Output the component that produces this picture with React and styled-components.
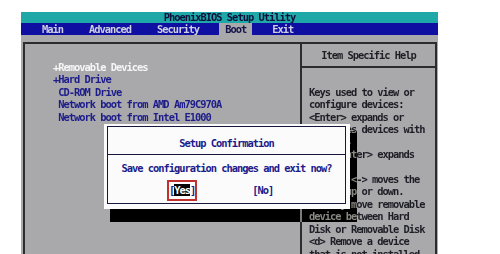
import React from "react";
import styled, { createGlobalStyle } from "styled-components";

const GRAY = "#a9a8aa";
const NAVY = "#1c1c8a";

const Global = createGlobalStyle`
  html, body { margin: 0; padding: 0; background: #ffffff; overflow: hidden; }
`;

const Page = styled.div`
  width: 500px;
  height: 254px;
  box-sizing: border-box;
  padding: 12px 0 0 21px;
  overflow: hidden;
`;

const Screen = styled.div`
  position: relative;
  width: 417px;
  font-family: "DejaVu Sans Mono", "Liberation Mono", monospace;
  font-size: 10.4px;
  font-weight: bold;
  letter-spacing: -1.0px;
`;

const TitleBar = styled.div`
  height: 11px;
  line-height: 11px;
  background: #1ea8a8;
  color: #0e0e3c;
  text-align: center;
`;

const MenuBar = styled.div`
  display: flex;
  height: 12px;
  padding-left: 15px;
  gap: 14px;
  background: #0f0fa2;
`;

const MenuItem = styled.div`
  padding: 0 6px;
  line-height: 12px;
  color: ${(p) => (p.$active ? "#14144a" : "#cfd0e2")};
  background: ${(p) => (p.$active ? GRAY : "transparent")};
`;

const Body = styled.div`
  background: ${GRAY};
  padding: 7px 1px 0 2px;
  height: 230px;
  box-sizing: border-box;
`;

const Frame = styled.div`
  display: grid;
  grid-template-columns: 275px 1fr;
  border: 2px solid #2c2c30;
  border-bottom: none;
  height: 240px;
`;

const LeftPanel = styled.div`
  padding: 16.8px 0 0 28px;
  line-height: 12.45px;
`;

const Item = styled.div`
  white-space: pre;
  color: ${(p) => (p.$selected ? "#f6f6f6" : NAVY)};
`;

const RightPanel = styled.div`
  border-left: 2px solid #2c2c30;
`;

const HelpHeader = styled.div`
  height: 22px;
  line-height: 22px;
  text-align: center;
  color: #1e1e24;
  border-bottom: 2px solid #2c2c30;
`;

const HelpBody = styled.div`
  padding: 17.8px 0 0 7px;
  line-height: 12.45px;
  color: #1e1e26;
`;

const HelpLine = styled.div`
  white-space: pre;
`;

const Shadow = styled.div`
  position: absolute;
  left: 89px;
  top: 119px;
  width: 247px;
  height: 91px;
  background: ${GRAY};
  mix-blend-mode: difference;
`;

const Dialog = styled.div`
  position: absolute;
  left: 83px;
  top: 112px;
  width: 246px;
  height: 85px;
  box-sizing: border-box;
  padding: 2px 4px 5px 3px;
  background: #fbfbfb;
`;

const DialogInner = styled.div`
  height: 100%;
  box-sizing: border-box;
  border: 1px solid #17173e;
  display: flex;
  flex-direction: column;
`;

const DialogTitle = styled.div`
  padding-top: 5px;
  height: 22px;
  line-height: 22px;
  text-align: center;
  color: ${NAVY};
  border-bottom: 1px solid #17173e;
`;

const Message = styled.div`
  padding-top: 6.5px;
  line-height: 12.45px;
  text-align: center;
  color: ${NAVY};
`;

const ButtonRow = styled.div`
  display: flex;
  align-items: center;
  gap: 55px;
  padding-left: 59px;
  margin-top: 6.5px;
`;

const Focus = styled.div`
  display: flex;
  align-items: center;
  height: 21px;
  box-sizing: border-box;
  border: 2px solid #c0302e;
`;

const Btn = styled.span`
  color: ${NAVY};
  line-height: 13px;
  white-space: pre;
`;

const Hi = styled.span`
  background: #050505;
  color: #ffffff;
`;

const menu = ["Main", "Advanced", "Security", "Boot", "Exit"];
const items = [
  { t: "+Removable Devices", sel: true },
  { t: "+Hard Drive" },
  { t: " CD-ROM Drive" },
  { t: " Network boot from AMD Am79C970A" },
  { t: " Network boot from Intel E1000" },
];
const help = [
  "Keys used to view or",
  "configure devices:",
  "<Enter> expands or",
  "collapses devices with",
  "a + or -",
  "<Ctrl+Enter> expands",
  "all",
  "<+> and <-> moves the",
  "device up or down.",
  "<n> May move removable",
  "device between Hard",
  "Disk or Removable Disk",
  "<d> Remove a device",
  "that is not installed.",
];

export default function App() {
  return (
    <Page>
      <Global />
      <Screen>
        <TitleBar>PhoenixBIOS Setup Utility</TitleBar>
        <MenuBar>
          {menu.map((m) => (
            <MenuItem key={m} $active={m === "Boot"}>
              {m}
            </MenuItem>
          ))}
        </MenuBar>
        <Body>
          <Frame>
            <LeftPanel>
              {items.map((it) => (
                <Item key={it.t} $selected={it.sel}>
                  {it.t}
                </Item>
              ))}
            </LeftPanel>
            <RightPanel>
              <HelpHeader>Item Specific Help</HelpHeader>
              <HelpBody>
                {help.map((h, i) => (
                  <HelpLine key={i}>{h}</HelpLine>
                ))}
              </HelpBody>
            </RightPanel>
          </Frame>
        </Body>
        <Shadow />
        <Dialog>
          <DialogInner>
            <DialogTitle>Setup Confirmation</DialogTitle>
            <Message>Save configuration changes and exit now?</Message>
            <ButtonRow>
              <Focus>
                <Btn>
                  [<Hi>Yes</Hi>]
                </Btn>
              </Focus>
              <Btn>[No]</Btn>
            </ButtonRow>
          </DialogInner>
        </Dialog>
      </Screen>
    </Page>
  );
}
